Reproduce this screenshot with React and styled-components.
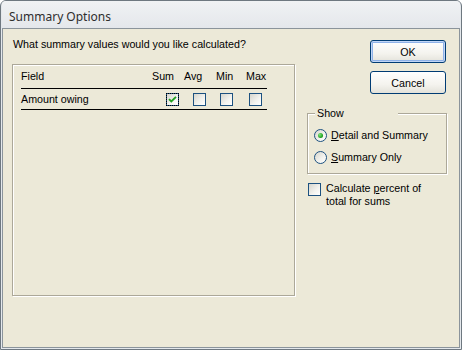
import React from "react";
import styled, { createGlobalStyle, css } from "styled-components";

const Global = createGlobalStyle`
  html, body { margin: 0; padding: 0; background: #ffffff; }
  body { font-family: "Liberation Sans", Arial, sans-serif; }
  * { box-sizing: border-box; }
`;

const UI_FONT = `"Liberation Sans", Arial, sans-serif`;

const Window = styled.div`
  width: 462px;
  height: 350px;
  border: 1px solid #6e7880;
  border-radius: 6px 6px 0 0;
  background: #e4e8ec;
  padding: 0 1px 1px 1px;
  display: flex;
  flex-direction: column;
  overflow: hidden;
`;

const TitleBar = styled.div`
  height: 27px;
  flex: none;
  display: flex;
  align-items: center;
  padding: 3px 0 0 7px;
  background: linear-gradient(#f0f2f4, #e4e7eb);
  font-family: "Noto Sans", "Open Sans", sans-serif;
  font-size: 12px;
  color: #2e2e2e;
`;

const Client = styled.div`
  flex: 1;
  border: 1px solid #8b949b;
  background: #ece9d8;
  display: grid;
  grid-template-columns: 295px 141px;
  align-items: start;
  padding: 9px 0 0 9px;
  font-family: ${UI_FONT};
  font-size: 10.7px;
  line-height: 13px;
  color: #000;
`;

const LeftCol = styled.div`
  display: flex;
  flex-direction: column;
`;

const Prompt = styled.div`
  padding-left: 1px;
  height: 13px;
`;

const etched = css`
  border: 1px solid #aca899;
  box-shadow: 1px 1px 0 #ffffff, inset 1px 1px 0 #ffffff;
`;

const Panel = styled.div`
  ${etched};
  margin-top: 13px;
  width: 283px;
  height: 232px;
  padding: 0 0 0 8px;
`;

const Table = styled.div`
  width: 246px;
  display: flex;
  flex-direction: column;
`;

const Row = styled.div`
  display: grid;
  grid-template-columns: ${(p) => p.$cols};
  align-items: ${(p) => (p.$head ? "start" : "center")};
  height: ${(p) => (p.$head ? "24px" : "21px")};
  padding-top: ${(p) => (p.$head ? "5px" : "0")};
  border-bottom: 1px solid #000;
`;

const Cell = styled.span`
  white-space: nowrap;
`;

const RightCol = styled.div`
  margin-top: 2px;
  display: flex;
  flex-direction: column;
`;

const Button = styled.button`
  width: 76px;
  height: 23px;
  margin-left: 63px;
  margin-top: ${(p) => p.$gap || 0}px;
  border: 1px solid #003c74;
  border-radius: 3px;
  background: linear-gradient(#ffffff 0%, #f4f3ee 60%, #e3e2da 100%);
  font-family: ${UI_FONT};
  font-size: 10.7px;
  color: #000;
  padding: 0;
  ${(p) =>
    p.$default &&
    css`
      box-shadow: inset 0 0 0 1px #c2d6f6, inset 0 0 0 2px #8fb2e8;
    `}
`;

const Group = styled.div`
  ${etched};
  position: relative;
  margin-top: 19px;
  width: 140px;
  height: 61px;
  padding: 10px 0 0 6px;
  display: flex;
  flex-direction: column;
`;

const Legend = styled.span`
  position: absolute;
  top: -7px;
  left: 7px;
  width: 83px;
  padding-left: 2px;
  background: #ece9d8;
  line-height: 13px;
`;

const Option = styled.label`
  height: 22px;
  display: flex;
  align-items: center;
  gap: 4px;
`;

const Radio = styled.span`
  width: 13px;
  height: 13px;
  flex: none;
  border-radius: 50%;
  border: 1px solid #1c5180;
  background: linear-gradient(135deg, #d6d5cd 0%, #f3f3ef 60%, #ffffff 100%);
  display: flex;
  align-items: center;
  justify-content: center;
  &::after {
    content: "";
    display: ${(p) => (p.$on ? "block" : "none")};
    width: 5px;
    height: 5px;
    border-radius: 50%;
    background: radial-gradient(circle at 35% 35%, #7ee87a, #1a9a1a 70%);
  }
`;

const Box = styled.span`
  width: 13px;
  height: 13px;
  flex: none;
  border: 1px solid #1c5180;
  background: linear-gradient(135deg, #d6d5cd 0%, #f3f3ef 60%, #ffffff 100%);
  display: flex;
  align-items: center;
  justify-content: center;
  margin-top: ${(p) => p.$mt || 0}px;
  ${(p) =>
    p.$focus &&
    css`
      outline: 1px dotted #000;
      outline-offset: -1px;
    `}
`;

const CheckLine = styled.label`
  margin-top: 8px;
  margin-left: 1px;
  display: flex;
  align-items: flex-start;
  gap: 5px;
`;

const Check = () => (
  <svg width="9" height="9" viewBox="0 0 9 9">
    <path d="M1 4.2 L3.3 6.5 L8 1.8" fill="none" stroke="#21a121" strokeWidth="1.9" />
  </svg>
);

const HEAD_COLS = "131px 32px 32px 30px 1fr";
const ROW_COLS = "145px 27px 27px 29px 1fr";

export default function App() {
  return (
    <>
      <Global />
      <Window>
        <TitleBar>Summary Options</TitleBar>
        <Client>
          <LeftCol>
            <Prompt>What summary values would you like calculated?</Prompt>
            <Panel>
              <Table>
                <Row $head $cols={HEAD_COLS}>
                  <Cell>Field</Cell>
                  <Cell>Sum</Cell>
                  <Cell>Avg</Cell>
                  <Cell>Min</Cell>
                  <Cell>Max</Cell>
                </Row>
                <Row $cols={ROW_COLS}>
                  <Cell>Amount owing</Cell>
                  <Box $focus>
                    <Check />
                  </Box>
                  <Box />
                  <Box />
                  <Box />
                </Row>
              </Table>
            </Panel>
          </LeftCol>
          <RightCol>
            <Button $default>OK</Button>
            <Button $gap={8}>Cancel</Button>
            <Group>
              <Legend>Show</Legend>
              <Option>
                <Radio $on />
                <span>
                  <u>D</u>etail and Summary
                </span>
              </Option>
              <Option>
                <Radio />
                <span>
                  <u>S</u>ummary Only
                </span>
              </Option>
            </Group>
            <CheckLine>
              <Box $mt={1} />
              <span>
                Calculate <u>p</u>ercent of
                <br />
                total for sums
              </span>
            </CheckLine>
          </RightCol>
        </Client>
      </Window>
    </>
  );
}
